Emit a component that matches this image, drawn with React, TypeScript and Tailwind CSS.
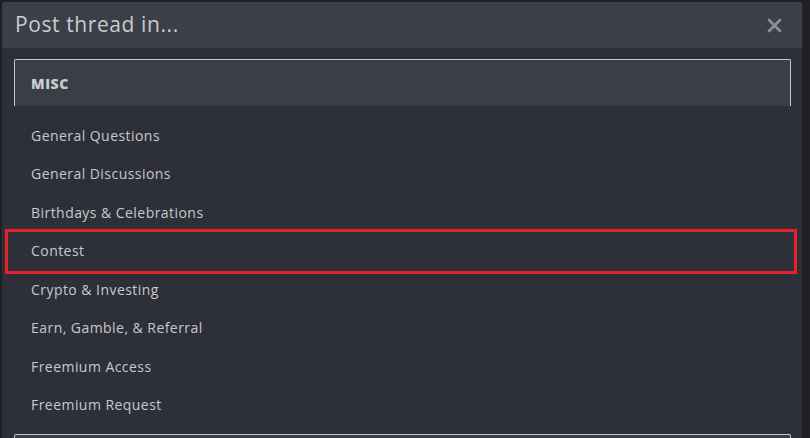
import React from "react";

const items = [
  "General Questions",
  "General Discussions",
  "Birthdays & Celebrations",
  "Contest",
  "Crypto & Investing",
  "Earn, Gamble, & Referral",
  "Freemium Access",
  "Freemium Request",
];

export default function App() {
  return (
    <div
      className="w-[810px] h-[438px] overflow-hidden bg-[#1e2025] pl-[2px] pt-[2px]"
      style={{ fontFamily: "'Open Sans', 'Noto Sans', sans-serif" }}
    >
      <div className="w-[800px] h-[440px] bg-[#2d3038] rounded-t-[3px] overflow-hidden">
        <div className="h-[46px] bg-[#3b3f48] flex items-center justify-between pl-[13px] pr-[20px]">
          <span className="text-[21px] text-[#c9cbd0] tracking-[0.6px]">Post thread in...</span>
          <svg width="15" height="15" viewBox="0 0 15 15">
            <path d="M2 2 L13 13 M13 2 L2 13" stroke="#8b8f97" strokeWidth="2.8" strokeLinecap="round" />
          </svg>
        </div>
        <div className="pt-[11px] px-[12px] pr-[11px]">
          <div className="h-[47px] bg-[#3a3e47] border border-b-0 border-[#c3c6cc] rounded-t-[2px] flex items-center pl-[16px]">
            <span className="text-[14px] font-extrabold text-[#c9cbd0] tracking-[0.6px]">MISC</span>
          </div>
          <div className="pt-[10px]">
            {items.map((t) => (
              <div key={t} className="relative h-[38.5px] flex items-center pl-[17px]">
                {t === "Contest" && (
                  <div className="absolute left-[-9px] right-[-6px] top-[-3px] bottom-[-4px] border-[3px] border-[#e8202a]" />
                )}
                <span className="text-[14px] text-[#c7c9ce] tracking-[0.45px]">{t}</span>
              </div>
            ))}
          </div>
          <div className="mt-[10px] h-[30px] bg-[#3a3e47] border border-b-0 border-[#c3c6cc] rounded-t-[2px]" />
        </div>
      </div>
    </div>
  );
}
